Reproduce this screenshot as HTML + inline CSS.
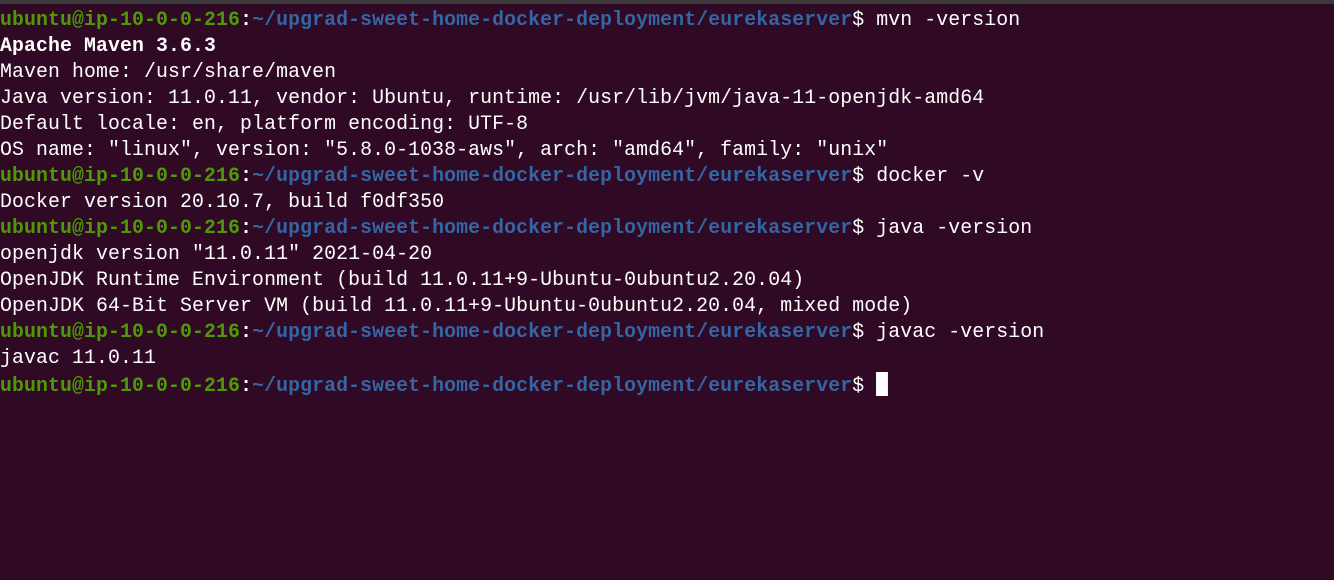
<!DOCTYPE html>
<html><head><meta charset="utf-8"><style>
html,body{margin:0;padding:0;width:1334px;height:580px;overflow:hidden;background:#300a24;}
.bar{position:absolute;left:0;top:0;width:1334px;height:4px;background:#3d3a3b;}
pre{position:absolute;left:0;top:8px;margin:0;font-family:"Liberation Mono",monospace;font-size:20px;letter-spacing:0.11px;line-height:26px;color:#ffffff;transform:scaleX(0.991);transform-origin:0 0;}
.g{color:#4e9a06;font-weight:bold}.b{color:#3465a4;font-weight:bold}.w{font-weight:bold}
.c{display:inline-block;width:12px;height:24px;background:#fff;vertical-align:-5px;}
</style></head><body><div class="bar"></div>
<pre><span class="g">ubuntu@ip-10-0-0-216</span><span class="w">:</span><span class="b">~/upgrad-sweet-home-docker-deployment/eurekaserver</span>$ mvn -version
<span class="w">Apache Maven 3.6.3</span>
Maven home: /usr/share/maven
Java version: 11.0.11, vendor: Ubuntu, runtime: /usr/lib/jvm/java-11-openjdk-amd64
Default locale: en, platform encoding: UTF-8
OS name: "linux", version: "5.8.0-1038-aws", arch: "amd64", family: "unix"
<span class="g">ubuntu@ip-10-0-0-216</span><span class="w">:</span><span class="b">~/upgrad-sweet-home-docker-deployment/eurekaserver</span>$ docker -v
Docker version 20.10.7, build f0df350
<span class="g">ubuntu@ip-10-0-0-216</span><span class="w">:</span><span class="b">~/upgrad-sweet-home-docker-deployment/eurekaserver</span>$ java -version
openjdk version "11.0.11" 2021-04-20
OpenJDK Runtime Environment (build 11.0.11+9-Ubuntu-0ubuntu2.20.04)
OpenJDK 64-Bit Server VM (build 11.0.11+9-Ubuntu-0ubuntu2.20.04, mixed mode)
<span class="g">ubuntu@ip-10-0-0-216</span><span class="w">:</span><span class="b">~/upgrad-sweet-home-docker-deployment/eurekaserver</span>$ javac -version
javac 11.0.11
<span class="g">ubuntu@ip-10-0-0-216</span><span class="w">:</span><span class="b">~/upgrad-sweet-home-docker-deployment/eurekaserver</span>$ <span class="c"></span></pre>
</body></html>
